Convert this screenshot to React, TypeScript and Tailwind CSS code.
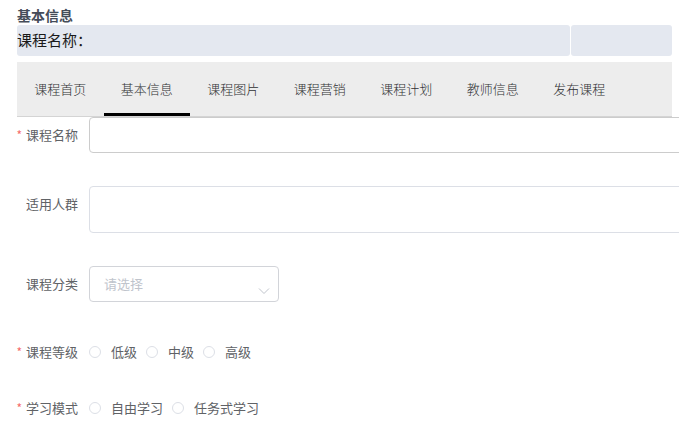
import { ReactNode } from 'react';

const tabs = ['课程首页', '基本信息', '课程图片', '课程营销', '课程计划', '教师信息', '发布课程'];

const Label = ({ text, required }: { text: string; required?: boolean }) => (
    <div className="flex h-9 w-[72px] shrink-0 items-center justify-end whitespace-nowrap pr-[11px] text-[13px] text-[#606266]">
        {required && <span className="mr-[4px] text-[12px] text-[#f56c6c]">*</span>}
        {text}
    </div>
);

const Radio = ({ text }: { text: string }) => (
    <div className="flex items-center whitespace-nowrap">
        <span className="h-[12px] w-[12px] rounded-full border border-[#dcdfe6] bg-white" />
        <span className="ml-[10px] text-[13px] text-[#606266]">{text}</span>
    </div>
);

const Row = ({ children, className }: { children: ReactNode; className?: string }) => (
    <div className={`flex items-start ${className ?? ''}`}>{children}</div>
);

export default function App() {
    return (
        <div
            className="w-full h-[426px] overflow-hidden bg-white pl-[17px]"
            style={{ fontFamily: '"Microsoft YaHei", "Noto Sans CJK SC", "Noto Sans", sans-serif' }}
        >
            <div className="pt-[5px] text-[14px] font-bold leading-5 text-[#454c59]">基本信息</div>

            <div className="flex h-[31px] w-[655px] gap-px">
                <div className="flex flex-1 items-center rounded-[3px] bg-[#e4e8f0] text-[15px] text-[#1a1a1a]">课程名称：</div>
                <div className="w-[101px] rounded-[3px] bg-[#e4e8f0]" />
            </div>

            <div className="mt-[6px] flex h-[55px] w-[655px] border-b border-[#d4d4d4] bg-[#ededed]">
                {tabs.map((t) => (
                    <div
                        key={t}
                        className={`flex w-[86.5px] items-center justify-center border-b-[3px] pt-[3px] text-[13px] font-light text-[#303133] ${t === '基本信息' ? 'border-black' : 'border-transparent'}`}
                    >
                        {t}
                    </div>
                ))}
            </div>

            <Row>
                <Label text="课程名称" required />
                <div className="h-9 w-[640px] shrink-0 rounded-[4px] border border-[#cccccc]" />
            </Row>

            <Row className="mt-[33px]">
                <Label text="适用人群" />
                <div className="h-[47px] w-[640px] shrink-0 rounded-[4px] border border-[#dcdfe6]" />
            </Row>

            <Row className="mt-[33px]">
                <Label text="课程分类" />
                <div className="flex h-9 w-[190px] items-center justify-between rounded-[4px] border border-[#d2d4d9] pl-[14px] pr-[8px]">
                    <span className="text-[13px] text-[#c0c4cc]">请选择</span>
                    <svg width="12" height="8" viewBox="0 0 12 8" className="mt-[14px]">
                        <path d="M1 1.5 L6 6.5 L11 1.5" fill="none" stroke="#c0c4cc" strokeWidth="1" />
                    </svg>
                </div>
            </Row>

            <Row className="mt-[32px]">
                <Label text="课程等级" required />
                <div className="flex h-9 items-center gap-[9px]">
                    <Radio text="低级" />
                    <Radio text="中级" />
                    <Radio text="高级" />
                </div>
            </Row>

            <Row className="mt-[20px]">
                <Label text="学习模式" required />
                <div className="flex h-9 items-center gap-[9px]">
                    <Radio text="自由学习" />
                    <Radio text="任务式学习" />
                </div>
            </Row>
        </div>
    );
}
